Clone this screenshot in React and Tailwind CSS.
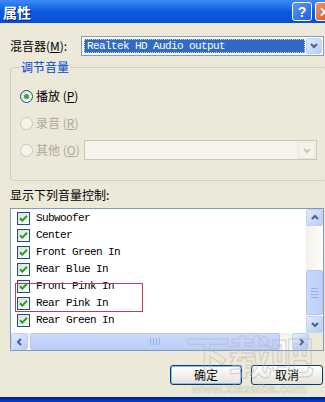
import React from "react";

const CJK = "font-['Noto_Sans_CJK_SC','Noto_Sans',sans-serif]";
const MONO = "font-['Liberation_Mono',monospace]";

function Check() {
  return (
    <svg width="13" height="13" viewBox="0 0 13 13" className="shrink-0">
      <defs>
        <linearGradient id="cbg" x1="0" y1="0" x2="1" y2="1">
          <stop offset="0" stopColor="#dcdbd3" />
          <stop offset="1" stopColor="#ffffff" />
        </linearGradient>
      </defs>
      <rect x="0.5" y="0.5" width="12" height="12" fill="url(#cbg)" stroke="#1c5180" />
      <path d="M3 6.2 L5.3 8.6 L10 3.8" fill="none" stroke="#21a121" strokeWidth="2" />
    </svg>
  );
}

function Radio({ checked, disabled }) {
  return (
    <svg width="13" height="13" viewBox="0 0 13 13" className="shrink-0">
      <defs>
        <linearGradient id="rbg" x1="0" y1="0" x2="1" y2="1">
          <stop offset="0" stopColor="#dcdbd3" />
          <stop offset="1" stopColor="#ffffff" />
        </linearGradient>
      </defs>
      <circle cx="6.5" cy="6.5" r="6" fill={disabled ? "#f5f4ea" : "url(#rbg)"} stroke={disabled ? "#cac8bb" : "#1c5180"} />
      {checked && <circle cx="6.5" cy="6.5" r="2.5" fill="#3aa33a" />}
    </svg>
  );
}

function Chevron({ dir, color = "#4d6185" }) {
  const pts = {
    down: "2,3 5,6 8,3",
    up: "2,6 5,3 8,6",
    left: "6,2 3,5 6,8",
    right: "4,2 7,5 4,8",
  }[dir];
  return (
    <svg width="10" height="10" viewBox="0 0 10 10">
      <polyline points={pts} fill="none" stroke={color} strokeWidth="2" />
    </svg>
  );
}

function ScrollBtn({ dir, disabled }) {
  return (
    <div
      className={
        "w-[17px] h-[17px] shrink-0 rounded-[2px] border flex items-center justify-center " +
        (disabled
          ? "border-[#e8e6dc] bg-[#f5f4ea]"
          : "border-[#c2d1f6] bg-gradient-to-br from-[#e2eafe] to-[#b7ccf7]")
      }
    >
      <Chevron dir={dir} color={disabled ? "#c9c7ba" : "#4d6185"} />
    </div>
  );
}

const items = [
  "Subwoofer",
  "Center",
  "Front Green In",
  "Rear Blue In",
  "Front Pink In",
  "Rear Pink In",
  "Rear Green In",
];

export default function App() {
  return (
    <div className={"relative w-[325px] h-[402px] overflow-hidden bg-[#ece9d8] flex flex-col text-[12px] text-black " + CJK}>
      {/* Title bar */}
      <div className="h-[23px] shrink-0 flex items-center bg-gradient-to-b from-[#3d8bf6] via-[#0a5be0] to-[#0550d8] pl-[3px]">
        <span className="text-white font-bold text-[14px] leading-none [text-shadow:1px_1px_0_#0a1e6e]">属性</span>
        <div className="ml-auto flex items-center gap-[3px] mr-[-10px]">
          <div className="w-[20px] h-[19px] rounded-[3px] border border-white bg-gradient-to-br from-[#5d97fb] to-[#1f5de0] flex items-center justify-center text-white font-bold text-[14px] leading-none font-['Liberation_Sans',sans-serif]">
            ?
          </div>
          <div className="w-[20px] h-[19px] rounded-[3px] border border-white bg-gradient-to-br from-[#f0956e] to-[#d2471a] flex items-center justify-center text-white font-bold text-[14px] leading-none font-['Liberation_Sans',sans-serif]">
            ✕
          </div>
        </div>
      </div>

      {/* Body */}
      <div className="flex flex-col pl-[10px] pr-[1px]">
        {/* mixer row */}
        <div className="flex items-center mt-[13px] h-[20px]">
          <span className="w-[71px] shrink-0 leading-[16px]">
            混音器(<span className="underline">M</span>):
          </span>
          <div className="flex-1 h-[20px] border border-[#7f9db9] bg-white flex items-stretch p-[1px]">
            <div className="flex-1 m-[1px] bg-[#316ac5] border border-dotted border-[#c9d6ee] flex items-center pl-[2px]">
              <span className={"text-white text-[11px] tracking-[-0.6px] leading-none " + MONO}>Realtek HD Audio output</span>
            </div>
            <div className="w-[16px] rounded-[2px] border border-[#c2d1f6] bg-gradient-to-br from-[#e2eafe] to-[#b7ccf7] flex items-center justify-center">
              <Chevron dir="down" />
            </div>
          </div>
        </div>

        {/* group box */}
        <fieldset className="mt-[4px] mr-[-4px] border border-[#d0d0bf] rounded-[4px] px-[9px] pt-[12px] pb-[20px] flex flex-col gap-[7px]">
          <legend className="px-[1px] text-[#0046d5] leading-[14px]">调节音量</legend>
          <div className="flex items-center h-[20px] gap-[3px]">
            <Radio checked />
            <span className="leading-[16px]">
              播放 (<span className="underline">P</span>)
            </span>
          </div>
          <div className="flex items-center h-[20px] gap-[3px] text-[#aca899]">
            <Radio disabled />
            <span className="leading-[16px]">
              录音 (<span className="underline">R</span>)
            </span>
          </div>
          <div className="flex items-center h-[20px] text-[#aca899]">
            <Radio disabled />
            <span className="leading-[16px] ml-[3px] w-[48px]">
              其他 (<span className="underline">O</span>)
            </span>
            <div className="w-[233px] h-[20px] border border-[#c9c7ba] bg-[#f5f4ea] flex justify-end p-[1px]">
              <ScrollBtn dir="down" disabled />
            </div>
          </div>
        </fieldset>

        <div className="mt-[6px] leading-[16px]">显示下列音量控制:</div>

        {/* list box */}
        <div className="mt-[5px] h-[143px] border border-[#7f9db9] bg-white flex flex-col">
          <div className="flex h-[124px]">
            <div className="relative flex-1 flex flex-col pt-[1px] pl-[6px]">
              {items.map((t) => (
                <div key={t} className="h-[17px] flex items-center gap-[6px]">
                  <Check />
                  <span className={"text-[11px] tracking-[-0.6px] leading-none " + MONO}>{t}</span>
                </div>
              ))}
              <div className="absolute left-[4px] top-[74px] w-[128px] h-[29px] border border-[#b8434f]" />
            </div>
            <div className="w-[17px] flex flex-col bg-gradient-to-r from-[#f3f1ec] to-[#fefefb]">
              <ScrollBtn dir="up" />
              <div className="flex-1 flex flex-col justify-end pb-[1px]">
                <div className="h-[45px] rounded-[2px] border border-[#b4c8f6] bg-gradient-to-r from-[#c9d8fc] to-[#bccff8] flex flex-col items-center justify-center gap-[2px]">
                  <div className="w-[7px] h-[1px] bg-[#8eb0f4]" />
                  <div className="w-[7px] h-[1px] bg-[#8eb0f4]" />
                  <div className="w-[7px] h-[1px] bg-[#8eb0f4]" />
                  <div className="w-[7px] h-[1px] bg-[#8eb0f4]" />
                </div>
              </div>
              <ScrollBtn dir="down" />
            </div>
          </div>
          <div className="flex h-[17px]">
            <div className="flex-1 flex bg-gradient-to-b from-[#f3f1ec] to-[#fefefb]">
              <ScrollBtn dir="left" />
              <div className="flex-1 flex pl-[2px] pr-[12px]">
                <div className="w-[250px] rounded-[2px] border border-[#b4c8f6] bg-gradient-to-b from-[#c9d8fc] to-[#bccff8] flex items-center justify-center gap-[2px]">
                  <div className="w-[1px] h-[7px] bg-[#8eb0f4]" />
                  <div className="w-[1px] h-[7px] bg-[#8eb0f4]" />
                  <div className="w-[1px] h-[7px] bg-[#8eb0f4]" />
                  <div className="w-[1px] h-[7px] bg-[#8eb0f4]" />
                </div>
              </div>
              <ScrollBtn dir="right" />
            </div>
            <div className="w-[17px] bg-[#ece9d8]" />
          </div>
        </div>

        {/* buttons */}
        <div className="mt-[14px] flex justify-end gap-[9px] pr-[1px]">
          <button className="w-[72px] h-[20px] rounded-[3px] border border-[#003c74] bg-gradient-to-b from-[#ffffff] to-[#e3e2da] shadow-[inset_0_0_0_1px_#98b8f0] leading-[16px]">
            确定
          </button>
          <button className="w-[72px] h-[20px] rounded-[3px] border border-[#003c74] bg-gradient-to-b from-[#ffffff] to-[#e3e2da] leading-[16px]">
            取消
          </button>
        </div>
      </div>

      <div className="flex-1" />
      <div className="h-[5px] shrink-0 bg-gradient-to-b from-[#001a8c] to-[#0a3fd0]" />

      {/* watermark */}
      <div className="absolute left-[186px] top-[328px] flex flex-col items-center pointer-events-none opacity-60">
        <span className="text-[44px] font-bold leading-[54px] text-transparent [-webkit-text-stroke:1px_#b9b9b2] tracking-[-2px]">下载吧</span>
        <span className="text-[13px] font-bold leading-[14px] text-transparent [-webkit-text-stroke:0.6px_#b9b9b2] font-['Liberation_Sans',sans-serif]">www.xiazaiba.com</span>
      </div>
    </div>
  );
}
